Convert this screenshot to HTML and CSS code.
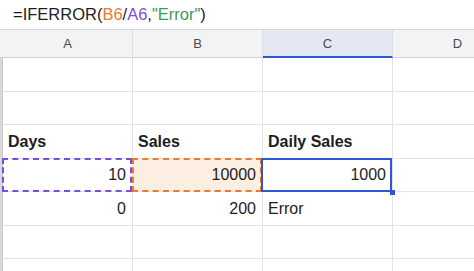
FILE: index.html
```html
<!DOCTYPE html>
<html lang="en">
<head>
    <meta charset="UTF-8">
    <title>Sheet - IFERROR</title>
    <link rel="stylesheet" href="styles.css">
</head>
<body>

<div class="formula-bar">
    <span>=IFERROR(</span><span class="ref-b">B6</span><span>/</span><span class="ref-a">A6</span><span>,</span><span class="str">"Error"</span><span>)</span>
</div>

<div class="sheet">
    <!-- cabeçalho das colunas -->
    <div class="corner"></div>
    <div class="col-head">A</div>
    <div class="col-head">B</div>
    <div class="col-head active">C</div>
    <div class="col-head">D</div>

    <div class="strip"></div><div class="cell"></div><div class="cell"></div><div class="cell"></div><div class="cell"></div>
    <div class="strip"></div><div class="cell"></div><div class="cell"></div><div class="cell"></div><div class="cell"></div>

    <div class="strip"></div>
    <div class="cell bold">Days</div>
    <div class="cell bold">Sales</div>
    <div class="cell bold">Daily Sales</div>
    <div class="cell"></div>

    <div class="strip"></div>
    <div class="cell num sel-a">10</div>
    <div class="cell num sel-b">10000</div>
    <div class="cell num sel-c">1000<span class="handle"></span></div>
    <div class="cell"></div>

    <div class="strip"></div>
    <div class="cell num">0</div>
    <div class="cell num">200</div>
    <div class="cell">Error</div>
    <div class="cell"></div>

    <div class="strip"></div><div class="cell"></div><div class="cell"></div><div class="cell"></div><div class="cell"></div>
    <div class="strip"></div><div class="cell"></div><div class="cell"></div><div class="cell"></div><div class="cell"></div>
</div>

</body>
</html>
```

FILE: styles.css
```css
html, body {
    overflow: hidden;
}
body {
    margin: 0;
    padding: 0;
    width: 474px;
    height: 271px;
    background-color: #fff;
    font-family: "Liberation Sans", Arial, sans-serif;
    color: #1d1d1f;
}

.formula-bar {
    height: 29px;
    border-bottom: 1px solid #d6d6d8;
    padding-left: 13px;
    display: flex;
    align-items: center;
    font-size: 16.5px;
    white-space: pre;
}
.ref-b { color: #ea7b31; }
.ref-a { color: #7a4de2; }
.str { color: #3d9b58; }

.sheet {
    width: 474px;
    height: 241px;
    overflow: hidden;
    display: grid;
    grid-template-columns: 3px 130px 130px 130px 130px;
    grid-template-rows: 28px 34px 33px 34px 33px 34px 33px 34px;
    font-size: 16px;
}

.corner {
    background-color: #f2f3f5;
    border-bottom: 1px solid #d3d3d6;
}
.col-head {
    background-color: #f2f3f5;
    border-right: 1px solid #dedee1;
    border-bottom: 1px solid #d3d3d6;
    display: flex;
    align-items: center;
    justify-content: center;
    font-size: 13px;
    color: #4a4a4e;
}
.col-head.active {
    background-color: #e3e8f2;
    border-bottom: 2px solid #2f56d6;
}

.strip {
    background-color: #d9d9dc;
    border-right: 1px solid #c8c8cc;
}
.cell {
    position: relative;
    border-right: 1px solid #e3e3e6;
    border-bottom: 1px solid #e3e3e6;
    display: flex;
    align-items: center;
    padding: 0 6px 0 5px;
}
.bold {
    font-weight: bold;
}
.num {
    justify-content: flex-end;
}

/* bordas das referências da fórmula */
.sel-a::after, .sel-b::after, .sel-c::after {
    content: "";
    position: absolute;
    top: -1px;
    left: -1px;
    right: 0;
    bottom: -1px;
}
.sel-a::after {
    border: 2px dashed #7a4de2;
}
.sel-b {
    background-color: #fdeee2;
}
.sel-b::after {
    border: 2px dashed #ea7b31;
}
.sel-c::after {
    border: 2px solid #2f56d6;
    left: -2px;
}
.handle {
    position: absolute;
    right: -3px;
    bottom: -4px;
    width: 5px;
    height: 5px;
    background-color: #2f56d6;
    z-index: 2;
}
```
